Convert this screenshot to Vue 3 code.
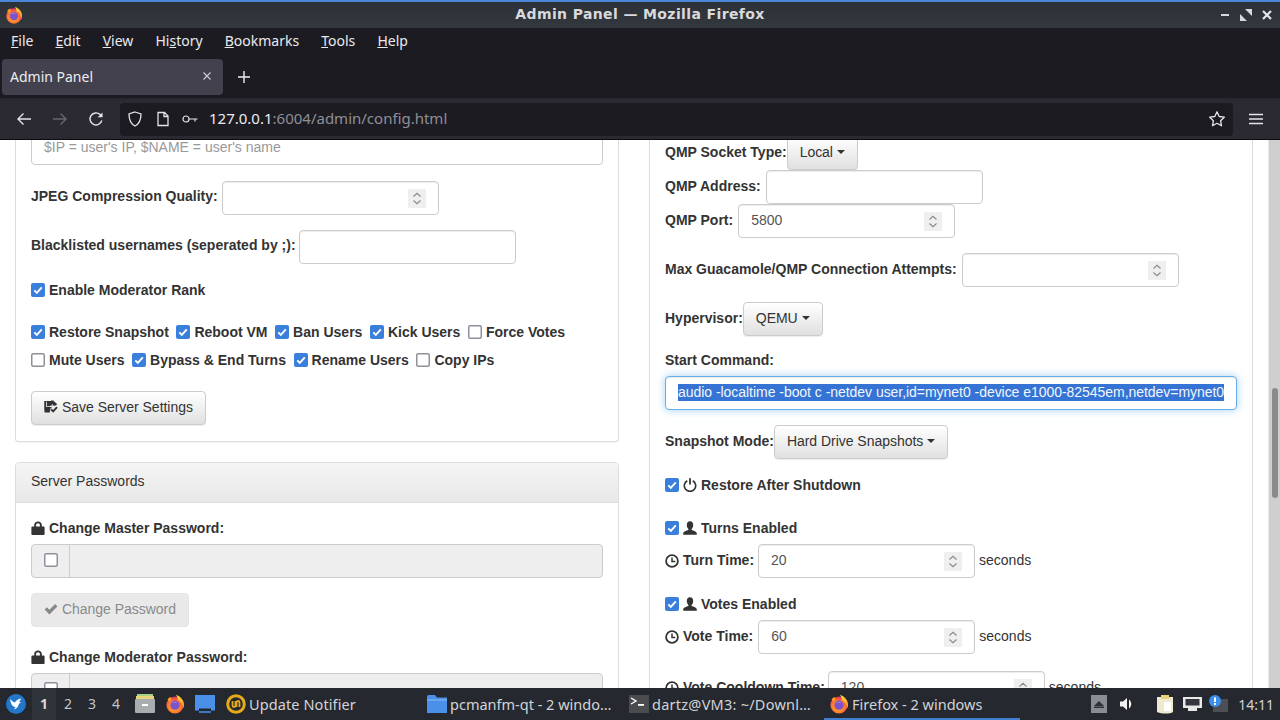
<script setup>
const menus = [
  ['', 'F', 'ile'], ['', 'E', 'dit'], ['', 'V', 'iew'], ['Hi', 's', 'tory'],
  ['', 'B', 'ookmarks'], ['', 'T', 'ools'], ['', 'H', 'elp']
]
const permRows = [
  [['Restore Snapshot', true], ['Reboot VM', true], ['Ban Users', true], ['Kick Users', true], ['Force Votes', false]],
  [['Mute Users', false], ['Bypass & End Turns', true], ['Rename Users', true], ['Copy IPs', false]]
]
const pager = [1, 2, 3, 4]
</script>

<template>
  <div class="screen">
    <svg class="sprite" width="0" height="0" aria-hidden="true">
      <defs>
        <radialGradient id="fxBody" cx="45%" cy="62%" r="60%">
          <stop offset="0" stop-color="#ffb02e" /><stop offset=".6" stop-color="#ff7a2a" /><stop offset="1" stop-color="#e8306a" />
        </radialGradient>
        <linearGradient id="fxFlame" x1="0" y1="0" x2="0" y2="1">
          <stop offset="0" stop-color="#ffd83a" /><stop offset="1" stop-color="#ff8a24" />
        </linearGradient>
        <symbol id="i-firefox" viewBox="0 0 20 20">
          <circle cx="10" cy="11" r="8.6" fill="url(#fxBody)" />
          <path d="M11 .8c4.6 1.6 8 5.4 8 10 0 1.6-.5 3-1.2 4.2.2-3.8-1.8-7.4-5-8.6C12.800 4.800 12.300 2.600 11 .8z" fill="url(#fxFlame)" />
          <path d="M2.500 5.500c1-1.500 2.300-2.300 3.500-2.600-.3 1 0 1.800.8 2.400L4 8z" fill="#ff9a2c" />
          <circle cx="10" cy="11.200" r="4.600" fill="#7d54c8" />
          <path d="M6 9c2-1.500 5-1.500 7 0-2-.5-5-.5-7 0z" fill="#b58ae8" />
        </symbol>
        <symbol id="i-check" viewBox="0 0 14 14">
          <rect width="14" height="14" rx="2" fill="#3a7fdc" />
          <path d="M3.300 7.400l2.500 2.500 5-5.600" fill="none" stroke="#fff" stroke-width="1.900" />
        </symbol>
        <symbol id="i-box" viewBox="0 0 14 14">
          <rect x=".75" y=".75" width="12.500" height="12.500" rx="1.500" fill="#fff" stroke="#8f8f9d" stroke-width="1.500" />
        </symbol>
        <symbol id="i-lock" viewBox="0 0 14 14">
          <path d="M3.200 5.500V4C3.200 1.800 4.800.4 7 .4s3.800 1.400 3.800 3.600v1.500h1.700c.6 0 1.100.5 1.100 1.100v6.300c0 .6-.5 1-1.100 1h-11c-.6 0-1.100-.4-1.100-1V6.600c0-.6.5-1.100 1.100-1.100zm1.900 0h3.800V4c0-1.100-.8-1.800-1.900-1.800S5.100 2.900 5.100 4z" fill="#333" />
        </symbol>
        <symbol id="i-user" viewBox="0 0 14 14">
          <path d="M7 .2c2.100 0 3.200 1.600 3.200 3.700 0 1.600-.6 3.100-1.600 4v1.100c2.100.7 5.200 1.500 5.200 3.400v1.400H.2v-1.400c0-1.900 3.100-2.700 5.200-3.400V7.900c-1-.9-1.600-2.400-1.600-4C3.800 1.800 4.900.2 7 .2z" fill="#333" />
        </symbol>
        <symbol id="i-clock" viewBox="0 0 14 14">
          <circle cx="7" cy="7" r="5.900" fill="none" stroke="#333" stroke-width="1.800" />
          <path d="M7 3.400V7.500h3.300" fill="none" stroke="#333" stroke-width="1.500" />
        </symbol>
        <symbol id="i-power" viewBox="0 0 14 14">
          <path d="M4.300 2.700a5.700 5.700 0 1 0 5.400 0" fill="none" stroke="#333" stroke-width="1.600" />
          <path d="M7 .3v6.200" stroke="#333" stroke-width="1.800" />
        </symbol>
        <symbol id="i-ok" viewBox="0 0 14 14">
          <path d="M.6 7.600l2.300-2.300 2.500 2.500 5.700-5.700 2.300 2.300-8 8z" fill="#888" />
        </symbol>
        <symbol id="i-save" viewBox="0 0 14 14">
          <path d="M.5 1H7v4.400h2V1l1.500 1.200v1.700L9 5.400 7 3.500V5L6 6.300H3V1.800H1.800V9L.5 10.400zM2 8h4.200v3H2z" fill="#333" />
          <path d="M7 .5h2.600v3.700H7zM.5 1h1.700v11H.5zM.5 7h7v1.400h-7zM.5 11h5.400v1.400H.5z" fill="#333" />
          <path d="M7.200 9.400l2 2 3.800-4.200" fill="none" stroke="#333" stroke-width="2" />
          <path d="M10.300 1.500l3 2.800-2.200 1.400H9.500V1.500z" fill="#333" />
        </symbol>
        <symbol id="i-spin" viewBox="0 0 18 19">
          <rect width="18" height="19" fill="#efefef" />
          <path d="M5.500 7.500L9 4.200l3.500 3.300M5.500 11.500L9 14.800l3.500-3.300" fill="none" stroke="#8b8b8b" stroke-width="1.200" />
        </symbol>
      </defs>
    </svg>

    <header class="titlebar">
      <svg class="title-logo"><use href="#i-firefox" /></svg>
      <span class="title-text">Admin Panel — Mozilla Firefox</span>
      <div class="win-btns">
        <svg width="14" height="14" viewBox="0 0 14 14"><rect x="3" y="6" width="8" height="2" fill="#d6d8dc" /></svg>
        <svg width="14" height="14" viewBox="0 0 14 14"><path d="M6 1h7v7zM1 6l7 7H1z" fill="#d6d8dc" /></svg>
        <svg width="14" height="14" viewBox="0 0 14 14"><path d="M3 3l8 8M11 3l-8 8" stroke="#e4e6e9" stroke-width="2.200" /></svg>
      </div>
    </header>

    <nav class="menubar">
      <span v-for="m in menus" :key="m[2]" class="menu">{{ m[0] }}<u>{{ m[1] }}</u>{{ m[2] }}</span>
    </nav>

    <div class="tabbar">
      <div class="tab">
        <span>Admin Panel</span>
        <svg width="10" height="10" viewBox="0 0 10 10"><path d="M1.500 1.500l7 7M8.500 1.500l-7 7" stroke="#c9c9cf" stroke-width="1.200" /></svg>
      </div>
      <svg class="plus" width="14" height="14" viewBox="0 0 14 14"><path d="M7 1v12M1 7h12" stroke="#eee" stroke-width="1.400" /></svg>
    </div>

    <div class="toolbar">
      <svg class="tool" viewBox="0 0 16 16"><path d="M15 8H2M7.500 2.500L2 8l5.500 5.500" fill="none" stroke="#e4e4e8" stroke-width="1.400" /></svg>
      <svg class="tool" viewBox="0 0 16 16"><path d="M1 8h13M8.500 2.500L14 8l-5.500 5.500" fill="none" stroke="#66656e" stroke-width="1.400" /></svg>
      <svg class="tool" viewBox="0 0 16 16"><path d="M13.800 9.500A6 6 0 1 1 12.200 3.600L14 5.500" fill="none" stroke="#e4e4e8" stroke-width="1.400" /><path d="M14.500 1.500v4.800H9.700z" fill="#e4e4e8" /></svg>
      <div class="urlbar">
        <svg class="u-shield" width="14" height="16" viewBox="0 0 14 16"><path d="M7 1l6 2c0 5-1 9.500-6 12C2 12.500 1 8 1 3z" fill="none" stroke="#e4e4e8" stroke-width="1.300" /></svg>
        <svg class="u-page" width="12" height="16" viewBox="0 0 12 16"><path d="M1 1.500h6.500L11 5v9.500H1zM7 1.500V5.500h4" fill="none" stroke="#e4e4e8" stroke-width="1.300" /></svg>
        <svg class="u-key" width="16" height="10" viewBox="0 0 16 10"><circle cx="4" cy="5" r="3" fill="none" stroke="#e4e4e8" stroke-width="1.200" /><path d="M7 5h8.500M13 5v2.500" fill="none" stroke="#e4e4e8" stroke-width="1.200" /></svg>
        <span class="url"><b>127.0.0.1</b>:6004/admin/config.html</span>
        <svg class="u-star" width="18" height="18" viewBox="0 0 18 18"><path d="M9 1.800l2.200 4.700 5.100.7-3.700 3.500.9 5.100L9 13.300l-4.500 2.500.9-5.100L1.700 7.200l5.100-.7z" fill="none" stroke="#e4e4e8" stroke-width="1.300" stroke-linejoin="round" /></svg>
      </div>
      <svg class="burger" width="14" height="12" viewBox="0 0 14 12"><path d="M0 1.500h14M0 6h14M0 10.500h14" stroke="#e4e4e8" stroke-width="1.300" /></svg>
    </div>

    <div class="viewport">
      <main class="page">
        <div class="column left">
          <section class="panel">
            <div class="body">
              <div class="input wide placeholder">$IP = user's IP, $NAME = user's name</div>
              <div class="line m16"><label>JPEG Compression Quality:</label><div class="input num"><svg class="spin"><use href="#i-spin" /></svg></div></div>
              <div class="line m15"><label>Blacklisted usernames (seperated by ;):</label><div class="input num nudge-back"></div></div>
              <div class="check m16"><svg class="cb"><use href="#i-check" /></svg><label>Enable Moderator Rank</label></div>
              <div class="perms">
                <div v-for="(row, r) in permRows" :key="r" class="perm-row">
                  <div v-for="p in row" :key="p[0]" class="check">
                    <svg class="cb"><use :href="p[1] ? '#i-check' : '#i-box'" /></svg><label>{{ p[0] }}</label>
                  </div>
                </div>
              </div>
              <button class="btn save"><svg class="ico"><use href="#i-save" /></svg>Save Server Settings</button>
            </div>
          </section>

          <section class="panel second">
            <div class="heading">Server Passwords</div>
            <div class="body">
              <div class="check"><svg class="cb"><use href="#i-lock" /></svg><label>Change Master Password:</label></div>
              <div class="group m6"><span class="addon"><svg class="cb"><use href="#i-box" /></svg></span><span class="disabled"></span></div>
              <button class="btn off m15"><svg class="ico"><use href="#i-ok" /></svg>Change Password</button>
              <div class="check m20"><svg class="cb"><use href="#i-lock" /></svg><label>Change Moderator Password:</label></div>
              <div class="group m6"><span class="addon"><svg class="cb"><use href="#i-box" /></svg></span><span class="disabled"></span></div>
            </div>
          </section>
        </div>

        <div class="column right">
          <section class="panel">
            <div class="body">
              <div class="line"><label>QMP Socket Type:</label><button class="btn tight">Local<i class="caret"></i></button></div>
              <div class="line"><label>QMP Address:</label><div class="input num nudge"></div></div>
              <div class="line"><label>QMP Port:</label><div class="input num nudge value">5800<svg class="spin"><use href="#i-spin" /></svg></div></div>
              <div class="line m15"><label>Max Guacamole/QMP Connection Attempts:</label><div class="input num nudge"><svg class="spin"><use href="#i-spin" /></svg></div></div>
              <div class="line m15"><label>Hypervisor:</label><button class="btn tight">QEMU<i class="caret"></i></button></div>
              <div class="check m14"><label>Start Command:</label></div>
              <div class="input wide focused m6"><span class="selected">audio -localtime -boot c -netdev user,id=mynet0 -device e1000-82545em,netdev=mynet0</span></div>
              <div class="line m15"><label>Snapshot Mode:</label><button class="btn tight">Hard Drive Snapshots<i class="caret"></i></button></div>
              <div class="check m16"><svg class="cb"><use href="#i-check" /></svg><svg class="cb"><use href="#i-power" /></svg><label>Restore After Shutdown</label></div>
              <div class="check m23"><svg class="cb"><use href="#i-check" /></svg><svg class="cb"><use href="#i-user" /></svg><label>Turns Enabled</label></div>
              <div class="line m6"><svg class="cb"><use href="#i-clock" /></svg><label>Turn Time:</label><div class="input num value">20<svg class="spin"><use href="#i-spin" /></svg></div><span class="unit">seconds</span></div>
              <div class="check m16"><svg class="cb"><use href="#i-check" /></svg><svg class="cb"><use href="#i-user" /></svg><label>Votes Enabled</label></div>
              <div class="line m6"><svg class="cb"><use href="#i-clock" /></svg><label>Vote Time:</label><div class="input num nudge value">60<svg class="spin"><use href="#i-spin" /></svg></div><span class="unit">seconds</span></div>
              <div class="line m17"><svg class="cb"><use href="#i-clock" /></svg><label>Vote Cooldown Time:</label><div class="input num nudge-back value">120<svg class="spin"><use href="#i-spin" /></svg></div><span class="unit">seconds</span></div>
            </div>
          </section>
        </div>
      </main>
      <div class="scrolltrack"><div class="thumb"></div></div>
    </div>

    <footer class="taskbar">
      <div class="start">
        <svg width="20" height="20" viewBox="0 0 20 20"><circle cx="10" cy="10" r="10" fill="#2277c9" /><path d="M4 5c2 2 3 3 5 3.500C10 6.500 12 5 15 4.500c-.5 1.500-1 2.500-2 3.500 1 0 2 .2 2.500.6-1.500.4-2.500 1-3 2.400-.5 2-2 4-4.500 4.500l1.500-2.500C7 13 5 11 4 5z" fill="#fff" /></svg>
      </div>
      <div class="pager"><span v-for="p in pager" :key="p" :class="['desk', { on: p === 1 }]">{{ p }}</span></div>
      <div class="launch first">
        <svg width="22" height="20" viewBox="0 0 22 20"><rect x="3" y="0" width="16" height="4" fill="#a8d08d" /><rect x="2" y="2" width="18" height="4" fill="#e8d27a" /><rect x="1" y="5" width="20" height="14" rx="1" fill="#a9adb0" /><rect x="8" y="10" width="6" height="2" fill="#fff" /></svg>
      </div>
      <div class="launch"><svg width="20" height="20"><use href="#i-firefox" /></svg></div>
      <div class="launch">
        <svg width="20" height="18" viewBox="0 0 20 18"><path d="M0 0h20v15.500h-4V13.500H4v2H0z" fill="#4a90e8" /><path d="M4 16h12v2H4z" fill="#3a78c8" /></svg>
      </div>
      <div class="notifier">
        <svg width="20" height="20" viewBox="0 0 20 20"><circle cx="10" cy="10" r="8.300" fill="none" stroke="#e5a91c" stroke-width="3" /><path d="M6.500 7v4.500c0 2 3 2 3 0V7M10.500 13V8.500c0-2 3-2 3 0V13" fill="none" stroke="#e5a91c" stroke-width="1.800" /></svg>
        <span>Update Notifier</span>
      </div>
      <div class="task">
        <svg width="20" height="18" viewBox="0 0 20 18"><path d="M0 2c0-1 .6-2 1.500-2H8l2 2.500h10V18H0z" fill="#4a90e8" /><path d="M0 4h20v2H0z" fill="#6aa7ee" /></svg>
        <span>pcmanfm-qt - 2 windo…</span>
      </div>
      <div class="task term">
        <svg width="20" height="18" viewBox="0 0 20 18"><rect width="20" height="18" fill="#4a4c50" /><path d="M2 3l5 3-5 3" fill="none" stroke="#fff" stroke-width="1.400" /><rect x="9" y="9" width="6" height="1.800" fill="#fff" /></svg>
        <span>dartz@VM3: ~/Downl…</span>
      </div>
      <div class="task active">
        <svg width="20" height="20"><use href="#i-firefox" /></svg>
        <span>Firefox - 2 windows</span>
      </div>
      <div class="tray">
        <div class="tray-up"><svg width="10" height="7" viewBox="0 0 10 7"><path d="M5 0l5 5H0z" fill="#2e3137" /><rect y="5.500" width="10" height="1.500" fill="#2e3137" /></svg></div>
        <svg class="t-vol" width="16" height="16" viewBox="0 0 16 16"><path d="M1 5.500h3L8 2v12l-4-3.500H1z" fill="#f2f2f2" /><path d="M10 3.500c3 2 3 7 0 9z" fill="#f2f2f2" /></svg>
        <svg class="t-note" width="20" height="20" viewBox="0 0 20 20"><path d="M2 3h16v15c-3 2-11 2-16 0z" fill="#f0e9cf" /><path d="M6 1h8v4H6z" fill="#e8d27a" /><path d="M9 8h7v9H9z" fill="#fff" /></svg>
        <svg class="t-net" width="21" height="18" viewBox="0 0 21 18"><path d="M1 2h19v11h-5v3H6v-3H1z" fill="#e8e8e8" /><path d="M3.500 4h14v6.500h-14z" fill="#33363c" /></svg>
        <svg class="t-info" width="19" height="18" viewBox="0 0 19 18"><rect x="4" y="4" width="15" height="13" fill="#4c5054" /><circle cx="6" cy="6" r="6" fill="#3a8fe8" /><rect x="5" y="2.500" width="2" height="4.500" fill="#fff" /><rect x="5" y="8" width="2" height="2" fill="#fff" /></svg>
        <span class="clock">14:11</span>
      </div>
    </footer>
  </div>
</template>

<style>
html, body { margin: 0; background: #fff; }
</style>

<style scoped>
.screen {
  width: 1280px; height: 720px; display: flex; flex-direction: column; overflow: hidden;
  font-family: "Liberation Sans", Arial, sans-serif; font-size: 14px; color: #333; background: #fff;
}
.sprite { position: absolute; }

/* window chrome */
.titlebar {
  height: 26px; flex: none; border-top: 2px solid #4a86d8; background: linear-gradient(#2c3037, #33373e);
  display: flex; align-items: center; justify-content: center; position: relative; color: #d8dade;
  font: bold 14px "DejaVu Sans", sans-serif; letter-spacing: .38px;
}
.title-logo { position: absolute; left: 5px; top: 4px; width: 18px; height: 18px; }
.title-text { margin-top: -3px; }
.win-btns { position: absolute; right: 6px; top: 6px; display: flex; gap: 7px; }

.menubar {
  height: 28px; flex: none; box-sizing: border-box; padding: 0 0 4px 11px; background: #1c1b22; color: #eaeaee; display: flex; align-items: center;
  gap: 22.1px; font: 14px "Noto Sans", sans-serif;
}
.tabbar { height: 42px; flex: none; background: #1c1b22; display: flex; align-items: center; padding-left: 2px; }
.tab {
  width: 221px; height: 36px; box-sizing: border-box; padding: 0 11px 2px 8px; background: #42414d; border-radius: 4px;
  display: flex; align-items: center; justify-content: space-between; color: #ececf0; font: 14px "Noto Sans", sans-serif;
}
.plus { margin-left: 14px; }

.toolbar {
  height: 42px; flex: none; background: #2b2a33; border-top: 1px solid #26252d; border-bottom: 1px solid #0c0c0e;
  display: flex; align-items: center; padding-left: 16px; box-sizing: border-box;
}
.tool { width: 16px; height: 16px; margin-right: 20px; flex: none; }
.tool:nth-of-type(3) { margin-right: 16px; }
.urlbar {
  width: 1113px; height: 33px; background: #1c1b22; border-radius: 4px; display: flex; align-items: center; flex: none;
  padding-left: 8px; box-sizing: border-box; color: #8f8f97; font: 15px "Noto Sans", sans-serif;
}
.url { margin: -2px 0 0 -1px; }
.url b { font-weight: 400; color: #ececf0; }
.u-shield { margin-right: 15px; }
.u-page { margin-right: 13px; }
.u-key { margin-right: 12px; }
.u-star { margin-left: auto; margin-right: 7px; }
.burger { margin-left: 16px; flex: none; }

/* page */
.viewport { flex: 1; min-height: 0; display: flex; overflow: hidden; background: #fff; }
.page {
  width: 1268px; flex: none; box-sizing: border-box; padding-left: 15px; display: grid;
  grid-template-columns: 604px 604px; column-gap: 30px; align-items: start; height: 548px;
}
.column { min-width: 0; }
.column.left { margin-top: -9px; }
.column.right { margin-top: -4px; }
.panel { border: 1px solid #ddd; border-radius: 4px; background: #fff; box-shadow: 0 1px 1px rgba(0, 0, 0, .05); box-sizing: border-box; }
.panel.second { margin-top: 20px; }
.column > .panel:first-child { border-top: 0; border-radius: 0 0 4px 4px; }
.body { padding: 15px; }
.left .panel:first-child .body { padding: 0 15px 16px; }
.right .body { padding: 0 15px; height: 900px; }
.heading {
  height: 40px; line-height: 37px; padding-left: 15px; background: linear-gradient(#f5f5f5, #e8e8e8); border-bottom: 1px solid #ddd;
  box-sizing: border-box; color: #333; border-radius: 3px 3px 0 0;
}

label { font-weight: 700; }
.line { display: flex; align-items: center; gap: 4px; height: 34px; }
.line label { margin-bottom: 2px; }
.left .line label { margin-bottom: 4px; }
.check { display: flex; align-items: center; gap: 4px; height: 20px; }
.cb { width: 14px; height: 14px; flex: none; }
.m6 { margin-top: 6px; } .m14 { margin-top: 14px; } .m15 { margin-top: 15px; } .m16 { margin-top: 16px; }
.m17 { margin-top: 17px; } .m20 { margin-top: 20px; } .m23 { margin-top: 23px; }

.input {
  height: 34px; box-sizing: border-box; border: 1px solid #ccc; border-radius: 4px; background: #fff;
  box-shadow: inset 0 1px 1px rgba(0, 0, 0, .075); display: flex; align-items: center; padding: 0 12px 2px; color: #555; position: relative;
}
.wide { width: 100%; }
.num { width: 217px; flex: none; }
.nudge { margin-left: 1px; }
.nudge-back { margin-left: -1px; }
.placeholder { color: #999; }
.spin { position: absolute; right: 12px; top: 7px; width: 18px; height: 19px; }
.unit { color: #333; margin-bottom: 2px; }
.focused { border-color: #66afe9; box-shadow: inset 0 1px 1px rgba(0, 0, 0, .075), 0 0 8px rgba(102, 175, 233, .6); overflow: hidden; }
.selected { background: #3574d4; color: #f2f6fd; white-space: nowrap; line-height: 17px; letter-spacing: -.04px; }

.perms { margin-top: 22px; display: flex; flex-direction: column; gap: 8px; }
.perm-row { display: flex; gap: 7.6px; }

.btn {
  height: 34px; box-sizing: border-box; padding: 0 12px 2px; border: 1px solid #ccc; border-radius: 4px; color: #333; cursor: default;
  background: linear-gradient(#fff, #e0e0e0); box-shadow: inset 0 1px 0 rgba(255, 255, 255, .15), 0 1px 1px rgba(0, 0, 0, .075);
  font: 14px "Liberation Sans", Arial, sans-serif; letter-spacing: -.03px; display: inline-flex; align-items: center; flex: none;
}
.tight { margin-left: -4px; }
.save { margin-top: 21px; }
.ico { width: 14px; height: 14px; margin-right: 4px; flex: none; }
.off { background: #e9e9e9; color: #8a8a8a; border-color: #e4e4e4; box-shadow: none; }
.caret { width: 0; height: 0; margin-left: 4px; border-top: 4px solid #333; border-left: 4px solid transparent; border-right: 4px solid transparent; }

.group { display: flex; height: 34px; border: 1px solid #ccc; border-radius: 4px; box-sizing: border-box; background: #eee; }
.addon { width: 38px; padding-bottom: 2px; box-sizing: border-box; display: flex; align-items: center; justify-content: center; border-right: 1px solid #ccc; flex: none; }
.disabled { flex: 1; }

.scrolltrack { flex: 1; background: #cfcfcf; border-left: 1px solid #e9e9e9; position: relative; }
.thumb { position: absolute; left: 3px; top: 248px; width: 6px; height: 110px; border-radius: 3px; background: #8b8b8b; }

/* taskbar */
.taskbar {
  height: 32px; flex: none; background: #25282e; color: #d2d4d8; display: flex; align-items: center;
  font: 14.5px "Noto Sans", sans-serif; position: relative; z-index: 1;
}
.start { width: 32px; flex: none; display: flex; justify-content: center; }
.pager { display: flex; width: 96px; flex: none; }
.desk { width: 24px; height: 32px; line-height: 32px; text-align: center; flex: none; box-sizing: border-box; color: #c2c4c8; font-size: 14px; }
.desk.on { background: #2f333a; font-weight: 700; color: #d8dade; }
.launch { width: 30px; flex: none; display: flex; justify-content: center; }
.launch.first { margin-left: 2px; }
.notifier { width: 204px; flex: none; display: flex; align-items: center; gap: 3px; padding-left: 6px; box-sizing: border-box; letter-spacing: .1px; }
.task { width: 196px; height: 32px; flex: none; margin-right: 4px; display: flex; align-items: center; gap: 3px; padding-left: 3px; box-sizing: border-box; white-space: nowrap; overflow: hidden; }
.task.term { padding-left: 5px; letter-spacing: .25px; }
.task.active { padding-left: 5px; box-shadow: inset 0 -2px 0 #3f7fcf; }
.tray { margin-left: auto; display: flex; align-items: center; padding-right: 6px; }
.tray-up { width: 16px; height: 18px; background: #8a8d92; display: flex; align-items: center; justify-content: center; }
.t-vol { margin-left: 12px; }
.t-note { margin-left: 20px; }
.t-net { margin-left: 7px; }
.t-info { margin-left: 6px; }
.clock { margin-left: 10px; font-size: 14px; }
</style>
